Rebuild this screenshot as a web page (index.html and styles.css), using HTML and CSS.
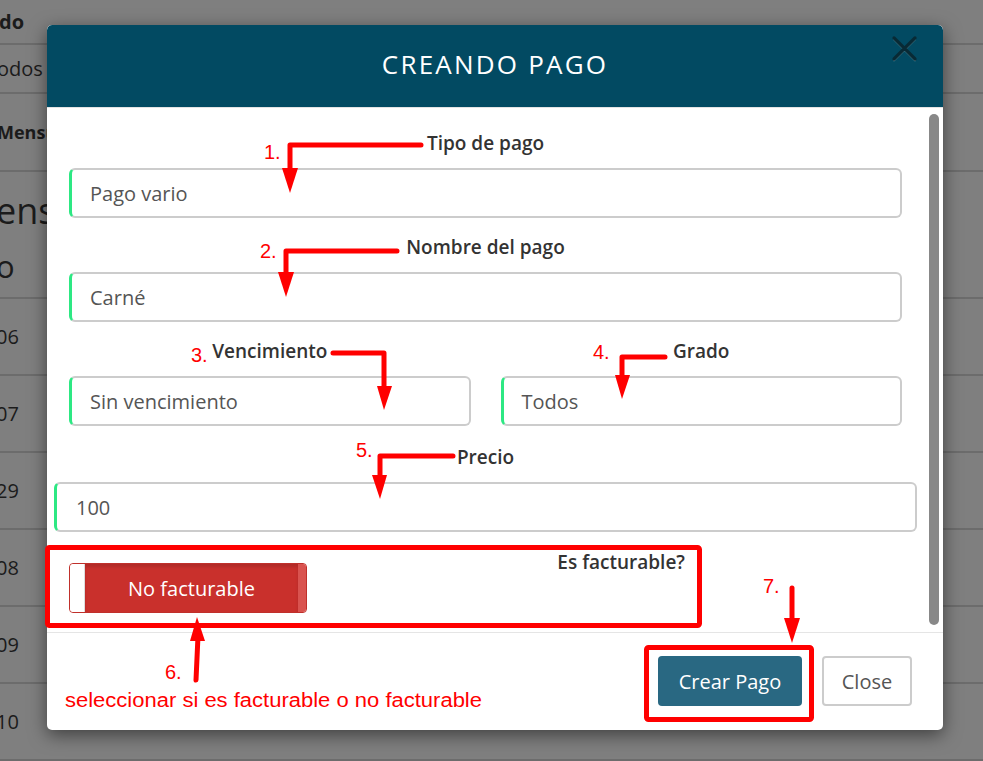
FILE: index.html
```html
<!DOCTYPE html>
<html lang="es">
<head>
    <meta charset="utf-8"/>
    <title>Creando pago</title>
    <link rel="stylesheet" href="styles.css">
</head>
<body>
    <!-- pagina de fondo (detras del modal) -->
    <div class="page">
        <div class="bg-row r-head"><b>do</b></div>
        <div class="bg-row r-filter">odos</div>
        <div class="bg-row r-tab"><b>Mensu</b></div>
        <div class="bg-row r-title">
            <span class="big">ens</span>
            <span class="col-name">o</span>
        </div>
        <div class="bg-row r-data">06</div>
        <div class="bg-row r-data">07</div>
        <div class="bg-row r-data">29</div>
        <div class="bg-row r-data">08</div>
        <div class="bg-row r-data">09</div>
        <div class="bg-row r-data">10</div>
    </div>

    <div class="modal">
        <div class="modal-header">
            <h4 class="modal-title">CREANDO PAGO</h4>
            <button class="close" type="button">
                <svg width="27" height="27" viewBox="0 0 27 27">
                    <path d="M3 4.5 L24 25.5 M24 4.5 L3 25.5" stroke="#8fb0bb" stroke-width="1.6" stroke-linecap="round"/>
                    <path d="M3 3 L24 24 M24 3 L3 24" stroke="#082a35" stroke-width="3.2" stroke-linecap="round"/>
                </svg>
            </button>
        </div>

        <div class="modal-body">
            <div class="form-area">
                <div class="group">
                    <label>Tipo de pago</label>
                    <div class="input">Pago vario</div>
                </div>
                <div class="group">
                    <label>Nombre del pago</label>
                    <div class="input">Carné</div>
                </div>
                <div class="row">
                    <div class="group">
                        <label>Vencimiento</label>
                        <div class="input">Sin vencimiento</div>
                    </div>
                    <div class="group">
                        <label>Grado</label>
                        <div class="input">Todos</div>
                    </div>
                </div>
                <div class="group wide">
                    <label>Precio</label>
                    <div class="input">100</div>
                </div>
                <div class="bill-row">
                    <div class="toggle">
                        <span class="handle"></span>
                        <span class="toggle-label">No facturable</span>
                        <span class="toggle-edge"></span>
                    </div>
                    <span class="bill-label">Es facturable?</span>
                </div>
            </div>
            <div class="scrollbar"><div class="thumb"></div></div>
        </div>

        <div class="modal-footer">
            <button class="btn btn-primary" type="button">Crear Pago</button>
            <button class="btn btn-default" type="button">Close</button>
        </div>
    </div>

    <!-- anotaciones en rojo -->
    <svg class="notes" width="983" height="761" viewBox="0 0 983 761">
        <g fill="none" stroke="#ff0000" stroke-width="5">
            <rect x="47.5" y="547.5" width="652" height="78" rx="2"/>
            <rect x="646.5" y="647.5" width="165" height="72" rx="2"/>
        </g>
        <g fill="none" stroke="#ff0000" stroke-width="5" stroke-linecap="round" stroke-linejoin="round">
            <path d="M421 145 H290 V172"/>
            <path d="M397 251 H286 V276"/>
            <path d="M333 353 H384 V390"/>
            <path d="M665 357 H622 V379"/>
            <path d="M453 456 H380 V479"/>
            <path d="M196 680 L198 636"/>
            <path d="M792 588 V622"/>
        </g>
        <g fill="#ff0000">
            <polygon points="282,168 298,168 290,193"/>
            <polygon points="278,272 294,272 286,297"/>
            <polygon points="377,386 392,386 384,410"/>
            <polygon points="615,375 630,375 622,399"/>
            <polygon points="372,475 387,475 380,499"/>
            <polygon points="190,641 205,641 197,617"/>
            <polygon points="784,618 800,618 792,643"/>
        </g>
        <g class="note-text">
            <text x="264" y="159">1.</text>
            <text x="260" y="258">2.</text>
            <text x="191" y="362">3.</text>
            <text x="593" y="359">4.</text>
            <text x="356" y="457">5.</text>
            <text x="165" y="679">6.</text>
            <text x="763" y="593">7.</text>
            <text x="65" y="707" textLength="417" lengthAdjust="spacingAndGlyphs">seleccionar si es facturable o no facturable</text>
        </g>
    </svg>
</body>
</html>
```

FILE: styles.css
```css
body {
    margin: 0;
    background: #7f7f7f;
    color: #1b1b1b;
    font-family: 'Open Sans', sans-serif;
    overflow: hidden;
    width: 983px;
    height: 761px;
    position: relative;
}

/* ---- pagina de fondo ---- */

.page {
    display: flex;
    flex-direction: column;
}

.bg-row {
    border-bottom: 2px solid #6c6c6c;
    display: flex;
    align-items: center;
    font-size: 20px;
    white-space: nowrap;
}

.r-head {
    height: 43px;
    margin-left: -1px;
}

.r-filter {
    height: 47px;
    margin-left: -3px;
}

.r-tab {
    height: 76px;
    font-size: 18px;
    margin-left: -3px;
}

.r-title {
    height: 125px;
    flex-direction: column;
    align-items: flex-start;
    margin-left: -4px;
}

.r-title .big {
    font-size: 36px;
    margin-top: 14px;
}

.r-title .col-name {
    font-size: 31px;
    margin-top: 10px;
}

.r-data {
    height: 75px;
    margin-left: -4px;
}

/* ---- modal ---- */

.modal {
    position: absolute;
    top: 25px;
    left: 47px;
    width: 896px;
    height: 705px;
    background: #fff;
    border-radius: 5px;
    box-shadow: 0 5px 18px rgba(0, 0, 0, 0.5);
    display: flex;
    flex-direction: column;
    overflow: hidden;
}

.modal-header {
    position: relative;
    height: 83px;
    box-sizing: border-box;
    padding-bottom: 4px;
    background: #024a62;
    border-bottom: 1px solid #e3e3e3;
    border-radius: 5px 5px 0 0;
    display: flex;
    align-items: center;
    justify-content: center;
}

.modal-title {
    margin: 0;
    color: #fff;
    font-size: 26px;
    font-weight: normal;
    letter-spacing: 2.2px;
}

.close {
    position: absolute;
    top: 10px;
    right: 25px;
    padding: 0;
    border: none;
    background: none;
    line-height: 0;
}

.modal-body {
    height: 524px;
    display: flex;
}

.form-area {
    flex: 1;
    padding: 24px 10px 0 7px;
}

.scrollbar {
    width: 16px;
    padding: 6px 4px 7px 2px;
    box-sizing: border-box;
}

.thumb {
    height: 100%;
    background: #888;
    border-radius: 5px;
}

.group {
    padding: 0 15px;
    margin-top: 18px;
}

.form-area > .group:first-child {
    margin-top: 0;
}

.group label {
    display: block;
    text-align: center;
    font-size: 19px;
    font-weight: 600;
    line-height: 22px;
    color: #333;
    margin-bottom: 14px;
}

.input {
    height: 50px;
    box-sizing: border-box;
    border: 2px solid #cccccc;
    border-left: 3px solid #2de883;
    border-radius: 6px;
    padding: 0 18px;
    display: flex;
    align-items: center;
    font-size: 20px;
    color: #555;
}

.row {
    display: flex;
}

.row .group {
    flex: 1;
}

.group.wide {
    padding: 0;
    margin-top: 20px;
}

.group.wide .input {
    padding-left: 19px;
}

.bill-row {
    display: flex;
    justify-content: space-between;
    width: 616px;
    padding-left: 15px;
    margin-top: 18px;
}

.bill-label {
    font-size: 19px;
    font-weight: 600;
    color: #333;
    line-height: 24px;
}

.toggle {
    display: flex;
    width: 238px;
    height: 50px;
    margin-top: 13px;
    box-sizing: border-box;
    border: 1px solid #c0302b;
    border-radius: 4px;
    overflow: hidden;
}

.handle {
    width: 14px;
    background: #fff;
    border-right: 1px solid #ddd;
    border-radius: 3px 0 0 3px;
}

.toggle-label {
    flex: 1;
    background: #c9302c;
    box-shadow: inset 0 3px 3px rgba(0, 0, 0, 0.12);
    color: #fff;
    font-size: 20px;
    display: flex;
    align-items: center;
    justify-content: center;
}

.toggle-edge {
    width: 8px;
    background: #d9534f;
}

.modal-footer {
    flex: 1;
    border-top: 1px solid #e5e5e5;
    display: flex;
    justify-content: flex-end;
    align-items: flex-start;
    padding: 23px 31px 0 0;
}

.btn {
    height: 50px;
    font-family: 'Open Sans', sans-serif;
    font-size: 20px;
    border-radius: 4px;
    cursor: pointer;
}

.btn-primary {
    width: 144px;
    background: #296882;
    color: #fff;
    border: none;
}

.btn-default {
    width: 90px;
    margin-left: 20px;
    background: #fff;
    color: #555;
    border: 2px solid #cccccc;
}

/* ---- anotaciones ---- */

.notes {
    position: absolute;
    top: 0;
    left: 0;
    pointer-events: none;
}

.note-text {
    fill: #ff0000;
    font-family: 'Liberation Sans', sans-serif;
    font-size: 20px;
}
```
